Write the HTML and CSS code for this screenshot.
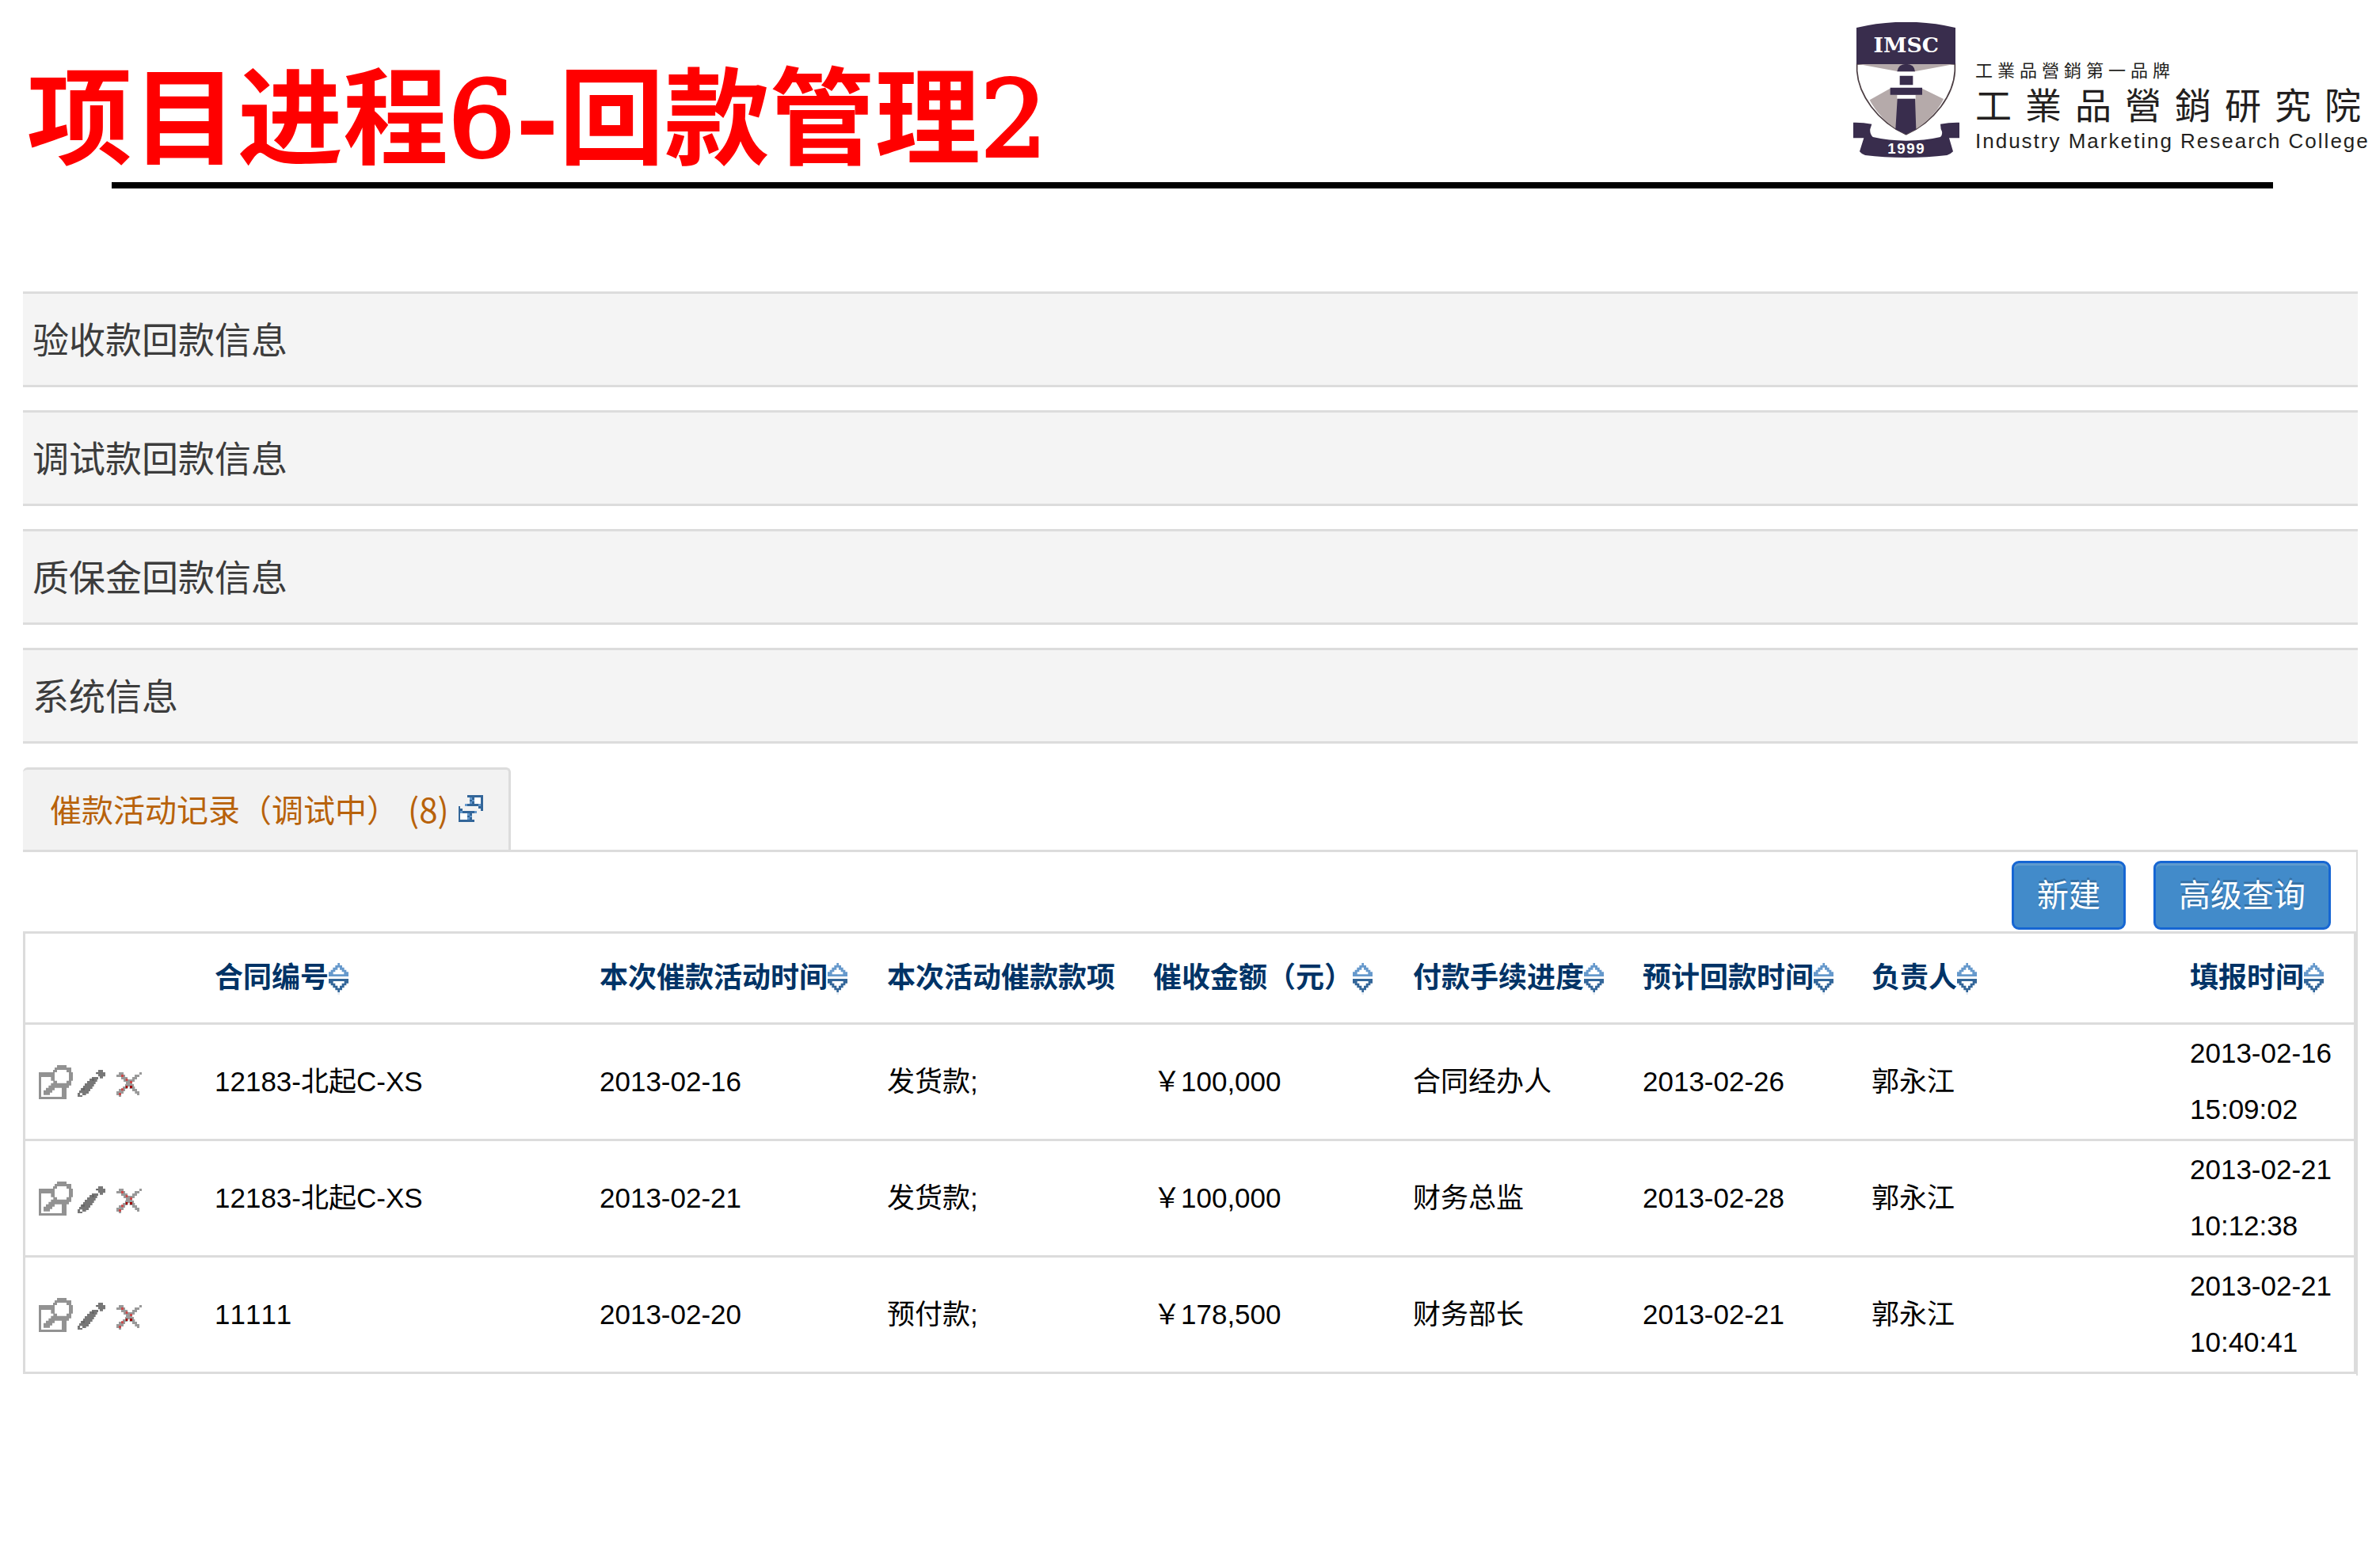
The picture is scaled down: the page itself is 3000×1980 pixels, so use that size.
FILE: index.html
```html
<!DOCTYPE html>
<html lang="zh-CN">
<head>
<meta charset="utf-8">
<meta name="viewport" content="width=device-width, initial-scale=1">
<title>项目进程6-回款管理2</title>
<link rel="stylesheet" href="styles.css">
</head>
<body>
<svg class="sprite" aria-hidden="true">
  <symbol id="i-sort" viewBox="0 0 75 120">
    <path fill="#6699cc" fill-rule="evenodd" d="M34 0h8v9h9v8h8v9h8v8h8v17H0V34h8v-8h8v-9h9V9h9zM34 17v9h-9v8h-8v9h41v-9h-8v-8h-8v-9z"/>
    <path fill="#336699" fill-rule="evenodd" d="M0 60h75v17h-8v8h-8v9h-8v9h-9v8h-8v-8h-9v-9h-9v-9H8v-8H0zM17 69v8h8v9h9v9h8v-9h8v-9h9v-8z"/>
    <path fill="#e4eaf2" d="M34 111h8v9h-8z"/>
  </symbol>
  <symbol id="i-view" viewBox="0 0 129 129">
    <path fill="#929292" fill-rule="evenodd" d="M0 27h54v-9h6V9h9V0h36v9h18v18h6v32h-6v18h-9v9h-9v43H0zM9 45v75h78V86H60v9h-9v9h-9v9H18V95h9v-9h10v-9h9v-9h9v-9h-9V45zM69 18v9h-9v32h9v9h36v-9h9V27h-9v-9z"/>
  </symbol>
  <symbol id="i-edit" viewBox="0 0 129 129">
    <path fill="#777" d="M78 18h18v9h9v16h-9v7H84v-7h-6v-9h-8v-7h8zM54 45h24v9h-4v9h-6v9h-6v9h-6v9h-8v9h-6v9h-10v6H18v6H0v-15h6v-9h6v-9h9v-9h6v-9h9v-9h9v-9h9z"/>
    <path fill="#666" d="M54 51h9v9h-9zM18 86h9v9h-9zM70 27h8v6h-8z"/>
    <path fill="#fff" d="M9 106h9v8H9z"/>
  </symbol>
  <symbol id="i-delete" viewBox="0 0 129 129">
    <path fill="#999" d="M9 27h18v9H9zM87 27h9v9h-9zM0 36h33v9H0zM69 36h18v9H69zM18 45h24v9H18zM60 45h18v9H60zM27 54h42v9H27zM36 63h24v9H36zM33 72h33v9H33zM24 81h18v9H24zM50 81h20v9H50zM9 90h24v9H9zM60 90h18v9H60zM0 99h27v9H0zM70 99h17v9H70zM0 108h18v6H0zM78 108h9v6h-9zM9 114h9v6H9z"/>
    <path fill="#c94a4a" d="M18 36h9v9h-9zM35 51h8v9h-8zM51 60h9v9h-9zM18 88h9v9h-9zM9 105h9v9H9z"/>
    <path fill="#a00000" d="M35 78h8v9h-8zM51 78h9v9h-9z"/>
  </symbol>
</svg>

<header class="page-head">
  <h1 class="page-title">项目进程<span class="digit">6</span>-回款管理<span class="digit">2</span></h1>
  <div class="brand">
    <svg class="brand-shield" viewBox="30 25 402 513" role="img" aria-label="IMSC 1999">
      <path fill="#fff" stroke="#4b3d42" stroke-width="5" d="M44 184V210C50 300 120 400 230 450C340 400 410 300 415 210V184z"/>
      <path fill="#b5aaaa" d="M50 184H412L262 212H200zM92 320L168 277H292L372 316C345 372 290 425 230 449C170 425 120 372 92 320z"/>
      <path fill="#392d4d" d="M42 46Q230 2 417 46V184H42zM196 212Q200 184 230 183Q262 184 264 212z"/>
      <path fill="#fff" d="M204 214h54v14h-54zM200 262h62v12h-62zM196 301h70v14h-70z"/>
      <path fill="#392d4d" d="M206 228h50v35h-50zM170 273h121v27H170zM197 315h67l4 116L230 450L190 431z"/>
      <path fill="#392d4d" d="M30 405Q65 404 100 411L94 430Q92 448 104 460Q165 474 230 474Q300 474 360 460Q372 448 362 430L360 411Q395 404 432 405V464H393L408 515Q400 524 385 529Q310 538 230 538Q145 538 75 529Q60 524 54 515L70 464H30z"/>
      <text class="shield-name" x="230" y="139">IMSC</text>
      <text class="shield-year" x="232" y="524">1999</text>
    </svg>
    <div class="brand-text" lang="zh-TW">
      <span class="brand-tagline">工業品營銷第一品牌</span>
      <span class="brand-name">工業品營銷研究院</span>
      <span class="brand-en">Industry Marketing Research College</span>
    </div>
  </div>
</header>
<hr class="head-rule">

<main class="content">
  <div class="sections">
    <h2 class="section-bar">验收款回款信息</h2>
    <h2 class="section-bar">调试款回款信息</h2>
    <h2 class="section-bar">质保金回款信息</h2>
    <h2 class="section-bar">系统信息</h2>
  </div>

  <a class="tab" href="#records"><span>催款活动记录（调试中）</span><span class="tab-count">(8)</span>
    <svg class="tab-icon" viewBox="57 51 93 102" aria-hidden="true">
      <path fill="#fff" d="M117 60h24v24h-24zM63 120h27v24H63z"/>
      <path fill="#336699" fill-rule="evenodd" d="M90 51h60v60h-9v-9h-9v-9H87v-9h12V60h-9zM117 60v24h24V60zM57 93h6v9h9v9h45v9h-9v24h9v9H57zM63 120v24h27v-24z"/>
      <path fill="#6699cc" d="M99 60h9v9h-9zM108 69h9v6h-9zM99 75h9v9h-9zM81 84h9v9h-9zM132 84h9v9h-9zM63 111h9v9h-9zM117 111h9v9h-9zM90 120h9v9h-9zM99 129h9v6h-9zM90 135h9v9h-9z"/>
    </svg>
  </a>

  <section class="related" id="records">
    <div class="toolbar">
      <button class="btn" type="button">新建</button>
      <button class="btn" type="button">高级查询</button>
    </div>
    <table class="records">
      <colgroup>
        <col class="c-actions"><col class="c-contract"><col class="c-time"><col class="c-item"><col class="c-amount"><col class="c-progress"><col class="c-expected"><col class="c-owner"><col class="c-filed">
      </colgroup>
      <thead>
        <tr>
          <th aria-label="操作"></th>
          <th>合同编号<svg class="sort"><use href="#i-sort"/></svg></th>
          <th>本次催款活动时间<svg class="sort"><use href="#i-sort"/></svg></th>
          <th>本次活动催款款项</th>
          <th>催收金额（元）<svg class="sort"><use href="#i-sort"/></svg></th>
          <th>付款手续进度<svg class="sort"><use href="#i-sort"/></svg></th>
          <th>预计回款时间<svg class="sort"><use href="#i-sort"/></svg></th>
          <th>负责人<svg class="sort"><use href="#i-sort"/></svg></th>
          <th>填报时间<svg class="sort"><use href="#i-sort"/></svg></th>
        </tr>
      </thead>
      <tbody>
        <tr>
          <td><div class="actions"><a href="#view" aria-label="查看"><svg><use href="#i-view"/></svg></a><a href="#edit" aria-label="编辑"><svg><use href="#i-edit"/></svg></a><a href="#delete" aria-label="删除"><svg><use href="#i-delete"/></svg></a></div></td>
          <td>12183-北起C-XS</td><td>2013-02-16</td><td>发货款;</td><td>￥100,000</td><td>合同经办人</td><td>2013-02-26</td><td>郭永江</td><td>2013-02-16 15:09:02</td>
        </tr>
        <tr>
          <td><div class="actions"><a href="#view" aria-label="查看"><svg><use href="#i-view"/></svg></a><a href="#edit" aria-label="编辑"><svg><use href="#i-edit"/></svg></a><a href="#delete" aria-label="删除"><svg><use href="#i-delete"/></svg></a></div></td>
          <td>12183-北起C-XS</td><td>2013-02-21</td><td>发货款;</td><td>￥100,000</td><td>财务总监</td><td>2013-02-28</td><td>郭永江</td><td>2013-02-21 10:12:38</td>
        </tr>
        <tr>
          <td><div class="actions"><a href="#view" aria-label="查看"><svg><use href="#i-view"/></svg></a><a href="#edit" aria-label="编辑"><svg><use href="#i-edit"/></svg></a><a href="#delete" aria-label="删除"><svg><use href="#i-delete"/></svg></a></div></td>
          <td>11111</td><td>2013-02-20</td><td>预付款;</td><td>￥178,500</td><td>财务部长</td><td>2013-02-21</td><td>郭永江</td><td>2013-02-21 10:40:41</td>
        </tr>
      </tbody>
    </table>
  </section>
</main>
</body>
</html>
```
FILE: styles.css
```css
* {
  box-sizing: border-box;
}

body {
  margin: 0;
  background: #fff;
  color: #000;
  font-family: "Liberation Sans", "Noto Sans CJK SC", sans-serif;
  font-kerning: none;
}

.sprite {
  display: none;
}

/* Page header */
.page-head {
  display: flex;
  justify-content: space-between;
  align-items: flex-start;
  height: 230px;
  padding: 28px 14px 0 34px;
}

.page-title {
  margin: 0;
  padding-top: 50px;
  color: #f00;
  font: 700 133px/144px "DejaVu Serif", "Noto Sans CJK SC", serif;
  white-space: nowrap;
}

.digit {
  font-weight: 400;
  -webkit-text-stroke: 4px #f00;
}

.brand {
  display: flex;
  align-items: flex-end;
  gap: 20px;
}

.brand-shield {
  width: 134px;
  height: 171px;
}

.shield-name,
.shield-year {
  fill: #fff;
  font-weight: 700;
  text-anchor: middle;
}

.shield-name {
  font-family: "DejaVu Serif", serif;
  font-size: 80px;
}

.shield-year {
  font-family: "Liberation Sans", sans-serif;
  font-size: 56px;
  letter-spacing: 5px;
}

.brand-text {
  display: flex;
  flex-direction: column;
  width: 492px;
  color: #231f20;
  font-family: "Liberation Sans", "Noto Sans CJK TC", sans-serif;
  white-space: nowrap;
}

.brand-tagline {
  font-size: 22px;
  line-height: 30px;
  letter-spacing: 6px;
}

.brand-name {
  margin: 4px 0 2px;
  font-size: 46px;
  line-height: 50px;
  letter-spacing: 17px;
}

.brand-en {
  padding-bottom: 4px;
  font-size: 26px;
  line-height: 34px;
  letter-spacing: 2px;
}

.head-rule {
  height: 8px;
  margin: 0 130px 0 141px;
  border: 0;
  background: #000;
}

/* Collapsed sections */
.content {
  padding: 130px 23px 80px 29px;
}

.sections {
  display: grid;
  gap: 29px;
}

.section-bar {
  margin: 0;
  padding: 0 12px 5px;
  border: solid #dcdcdc;
  border-width: 3px 0;
  background: #f4f4f4;
  color: #3c3c3c;
  font: 400 46px/110px "Noto Sans CJK SC", sans-serif;
}

/* Related list */
.tab {
  display: inline-flex;
  align-items: center;
  gap: 12px;
  height: 104px;
  margin-top: 30px;
  padding: 0 32px 3px 34px;
  border: solid #dcdcdc;
  border-width: 3px 3px 0 0;
  border-radius: 6px 6px 0 0;
  background: #f2f2f2;
  color: #b8620a;
  font: 400 40px/60px "Noto Sans CJK SC", sans-serif;
  text-decoration: none;
  vertical-align: top;
}

.tab-count {
  font-size: 42px;
}

.tab-icon {
  width: 31px;
  height: 34px;
}

.related {
  padding-bottom: 2px;
  border: solid #dcdcdc;
  border-width: 3px 2px 0 0;
}

.toolbar {
  display: flex;
  justify-content: flex-end;
  gap: 35px;
  padding: 11px 32px 2px;
}

.btn {
  height: 87px;
  padding: 0 29px 5px;
  border: 3px solid #1666d3;
  border-radius: 9px;
  background: #428bca;
  box-shadow: inset 0 3px 0 #5f9acd;
  color: #fff;
  font: 400 40px/60px "Noto Sans CJK SC", sans-serif;
  text-shadow: 0 -3px 0 rgba(0, 0, 0, 0.2);
}

.records {
  width: 100%;
  border: solid #dcdcdc;
  border-width: 3px 3px 0;
  border-spacing: 0;
  table-layout: fixed;
}

.c-actions { width: 231px; }
.c-contract { width: 486px; }
.c-time { width: 363px; }
.c-item { width: 336px; }
.c-amount { width: 328px; }
.c-progress { width: 290px; }
.c-expected { width: 289px; }
.c-filed { width: 215px; }

.records th,
.records td {
  padding: 0 8px;
  border-bottom: 3px solid #dcdcdc;
  text-align: left;
  vertical-align: middle;
}

.records th {
  height: 115px;
  color: #036;
  font-size: 36px;
  font-weight: 700;
  line-height: 72px;
  white-space: nowrap;
}

.records td {
  height: 147px;
  padding-bottom: 2px;
  font-size: 35px;
  line-height: 71px;
}

.sort {
  width: 25px;
  height: 40px;
  vertical-align: -9px;
}

.actions {
  display: flex;
  gap: 6px;
  padding: 2px 0 0 9px;
}

.actions a,
.actions svg {
  display: block;
  width: 43px;
  height: 43px;
}
```
